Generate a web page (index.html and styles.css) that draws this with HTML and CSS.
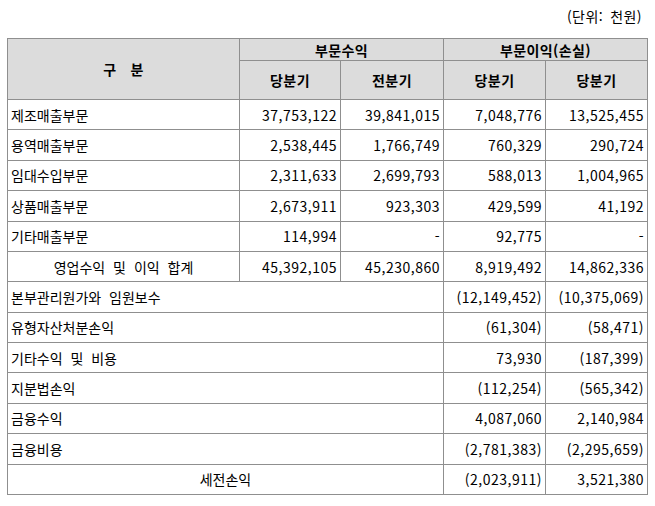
FILE: index.html
```html
<!DOCTYPE html>
<html lang="ko">
<head>
<meta charset="utf-8">
<link rel="stylesheet" href="styles.css">
</head>
<body>
<div class="page">
  <div class="unit">(단위: 천원)</div>
  <table class="report">
    <colgroup>
      <col class="c-label">
      <col class="c-num1">
      <col class="c-num2">
      <col class="c-num3">
      <col class="c-num4">
    </colgroup>
    <thead>
      <tr class="h1">
        <th rowspan="2" class="gubun">구<span class="gap"></span>분</th>
        <th colspan="2">부문수익</th>
        <th colspan="2">부문이익(손실)</th>
      </tr>
      <tr class="h2">
        <th>당분기</th>
        <th>전분기</th>
        <th>당분기</th>
        <th>당분기</th>
      </tr>
    </thead>
    <tbody>
      <tr><td class="lbl">제조매출부문</td><td class="num">37,753,122</td><td class="num">39,841,015</td><td class="num">7,048,776</td><td class="num">13,525,455</td></tr>
      <tr><td class="lbl">용역매출부문</td><td class="num">2,538,445</td><td class="num">1,766,749</td><td class="num">760,329</td><td class="num">290,724</td></tr>
      <tr><td class="lbl">임대수입부문</td><td class="num">2,311,633</td><td class="num">2,699,793</td><td class="num">588,013</td><td class="num">1,004,965</td></tr>
      <tr><td class="lbl">상품매출부문</td><td class="num">2,673,911</td><td class="num">923,303</td><td class="num">429,599</td><td class="num">41,192</td></tr>
      <tr><td class="lbl">기타매출부문</td><td class="num">114,994</td><td class="num">-</td><td class="num">92,775</td><td class="num">-</td></tr>
      <tr><td class="lbl center">영업수익 및 이익 합계</td><td class="num">45,392,105</td><td class="num">45,230,860</td><td class="num">8,919,492</td><td class="num">14,862,336</td></tr>
      <tr><td class="lbl" colspan="3">본부관리원가와 임원보수</td><td class="num">(12,149,452)</td><td class="num">(10,375,069)</td></tr>
      <tr><td class="lbl" colspan="3">유형자산처분손익</td><td class="num">(61,304)</td><td class="num">(58,471)</td></tr>
      <tr><td class="lbl" colspan="3">기타수익 및 비용</td><td class="num">73,930</td><td class="num">(187,399)</td></tr>
      <tr><td class="lbl" colspan="3">지분법손익</td><td class="num">(112,254)</td><td class="num">(565,342)</td></tr>
      <tr><td class="lbl" colspan="3">금융수익</td><td class="num">4,087,060</td><td class="num">2,140,984</td></tr>
      <tr><td class="lbl" colspan="3">금융비용</td><td class="num">(2,781,383)</td><td class="num">(2,295,659)</td></tr>
      <tr><td class="lbl center" colspan="3">세전손익</td><td class="num">(2,023,911)</td><td class="num">3,521,380</td></tr>
    </tbody>
  </table>
</div>
</body>
</html>
```

FILE: styles.css
```css
html, body {
  margin: 0;
  padding: 0;
  background: #ffffff;
}

body {
  font-family: "Noto Sans CJK KR", "Noto Sans", sans-serif;
  font-size: 14px;
  color: #000000;
}

.page {
  padding-left: 7px;
}

.unit {
  height: 38px;
  line-height: 32px;
  text-align: right;
  padding-right: 6px;
  width: 641px;
  box-sizing: border-box;
  letter-spacing: 0.4px;
  word-spacing: 3px;
}

.report {
  border-collapse: collapse;
  table-layout: fixed;
  width: 641px;
  border: 1px solid #000000;
}

.c-label { width: 232px; }
.c-num1 { width: 101px; }
.c-num2 { width: 103px; }
.c-num3 { width: 102px; }
.c-num4 { width: 102px; }

.report th,
.report td {
  border: 1px solid #8f8f8f;
  padding: 0 3px;
  white-space: nowrap;
  overflow: hidden;
}

.report th {
  background: #dcdcdc;
  font-weight: bold;
  text-align: center;
  letter-spacing: 0.4px;
}

.h1 th { height: 21px; }
.h2 th { height: 38px; }

.gubun .gap {
  display: inline-block;
  width: 14px;
}

.report tbody tr { height: 30.38px; }

.lbl {
  text-align: left;
  padding-left: 5px;
  letter-spacing: 0;
  word-spacing: 4px;
}

.lbl.center {
  text-align: center;
}

.num {
  text-align: right;
  letter-spacing: 0.5px;
}
```
